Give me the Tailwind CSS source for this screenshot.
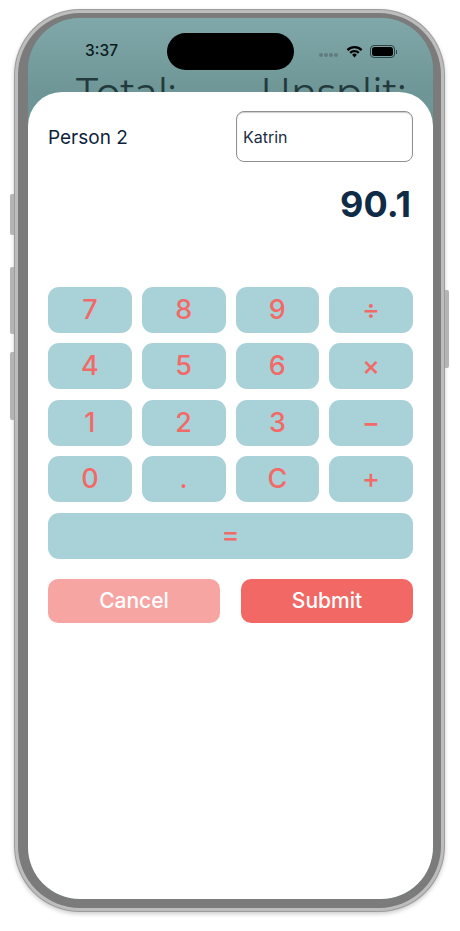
<!DOCTYPE html>
<html lang="en">
<head>
    <meta charset="UTF-8">
    <meta name="viewport" content="width=device-width, initial-scale=1.0">
    <title>Split Calculator</title>
    <script src="https://cdn.jsdelivr.net/npm/@tailwindcss/browser@4"></script>
</head>
<body class="bg-white font-['Inter',sans-serif] w-[460px] h-[931px] overflow-hidden pt-[9px] pl-[14px]">

    <!-- Phone frame -->
    <div class="relative w-[431px] h-[903px] rounded-[66px] bg-[#9c9c9c] p-[1px] shadow-[0_2px_4px_rgba(0,0,0,0.2)]">
        <!-- Side buttons -->
        <div class="absolute left-[-4px] top-[185px] w-[4px] h-[41px] rounded-l-[2px] bg-[#b4b4b4]"></div>
        <div class="absolute left-[-4px] top-[258px] w-[4px] h-[67px] rounded-l-[2px] bg-[#b4b4b4]"></div>
        <div class="absolute left-[-4px] top-[343px] w-[4px] h-[68px] rounded-l-[2px] bg-[#b4b4b4]"></div>
        <div class="absolute right-[-4px] top-[281px] w-[4px] h-[78px] rounded-r-[2px] bg-[#b4b4b4]"></div>

        <div class="w-full h-full rounded-[65px] bg-[#bdbdbd] p-[3px]">
            <div class="w-full h-full rounded-[62px] bg-[#7b7b7b] pt-[5px] pl-[10px] pr-[8px] pb-[9px]">

                <!-- Screen -->
                <div class="w-full h-full rounded-[52px] overflow-hidden bg-[#6f9696] flex flex-col">

                    <!-- Background page peeking above the sheet -->
                    <div class="h-[74px] shrink-0 overflow-hidden bg-gradient-to-b from-[#80a8aa] to-[#6f9696]">
                        <div class="relative h-[52px]">
                            <span class="absolute left-[57px] top-[23px] text-[15.5px] leading-5 font-medium text-[#0b1a1c]">3:37</span>
                            <div class="absolute left-[139px] top-[15px] w-[127px] h-[37px] rounded-[19px] bg-black"></div>
                            <!-- signal dots -->
                            <div class="absolute left-[291px] top-[35px] flex gap-[1px]">
                                <span class="w-[4px] h-[4px] rounded-full bg-[#5f7d7f]"></span>
                                <span class="w-[4px] h-[4px] rounded-full bg-[#5f7d7f]"></span>
                                <span class="w-[4px] h-[4px] rounded-full bg-[#5f7d7f]"></span>
                                <span class="w-[4px] h-[4px] rounded-full bg-[#5f7d7f]"></span>
                            </div>
                            <!-- wifi -->
                            <svg class="absolute left-[318px] top-[27px]" width="17" height="13" viewBox="0 0 17 13">
                                <path d="M0.6 4.2 A11.2 11.2 0 0 1 16.4 4.2 L14.8 5.9 A9 9 0 0 0 2.2 5.9 Z" fill="#000"/>
                                <path d="M3.4 7 A7.2 7.2 0 0 1 13.6 7 L12 8.7 A5 5 0 0 0 5 8.7 Z" fill="#000"/>
                                <path d="M6.1 9.8 A3.4 3.4 0 0 1 10.9 9.8 L8.5 12.4 Z" fill="#000"/>
                            </svg>
                            <!-- battery -->
                            <div class="absolute left-[342px] top-[27px] flex items-center gap-[1px]">
                                <div class="w-[25px] h-[13px] rounded-[4px] border border-[#2c4244] p-[1px]">
                                    <div class="w-full h-full rounded-[2.5px] bg-black"></div>
                                </div>
                                <div class="w-[1px] h-[4px] bg-[#2c4244]"></div>
                            </div>
                        </div>
                        <div class="flex justify-between pl-[48px] pr-[27px] font-['Montserrat','Lato',sans-serif] text-[38.5px] leading-[46px] font-normal text-[#233a3c]">
                            <span>Total:</span>
                            <span>Unsplit:</span>
                        </div>
                    </div>

                    <!-- Sheet -->
                    <div class="flex-1 bg-white rounded-t-[34px] px-5 pt-[19px]">
                        <div class="flex items-center justify-between">
                            <span class="pt-1 text-[19px] text-[#0e1f3d]">Person 2</span>
                            <input type="text" value="Katrin" class="w-[177px] h-[51px] px-[6px] rounded-[8px] border border-[#8f8f8f] bg-white text-[16px] text-[#1a2e45] shadow-[inset_0_1px_1px_rgba(0,0,0,0.2)] outline-none">
                        </div>

                        <div class="mt-[19px] h-[46px] text-right pr-[2px] text-[36px] leading-[46px] font-bold text-[#0f2b46]">90.1</div>

                        <!-- Keypad -->
                        <div class="mt-[60px] grid grid-cols-4 gap-x-[10px] gap-y-[10.4px] text-[27px] font-medium text-[#f26a67]">
                            <button class="h-[46px] rounded-[11px] bg-[#a8d2d8]">7</button>
                            <button class="h-[46px] rounded-[11px] bg-[#a8d2d8]">8</button>
                            <button class="h-[46px] rounded-[11px] bg-[#a8d2d8]">9</button>
                            <button class="h-[46px] rounded-[11px] bg-[#a8d2d8]">÷</button>
                            <button class="h-[46px] rounded-[11px] bg-[#a8d2d8]">4</button>
                            <button class="h-[46px] rounded-[11px] bg-[#a8d2d8]">5</button>
                            <button class="h-[46px] rounded-[11px] bg-[#a8d2d8]">6</button>
                            <button class="h-[46px] rounded-[11px] bg-[#a8d2d8]">×</button>
                            <button class="h-[46px] rounded-[11px] bg-[#a8d2d8]">1</button>
                            <button class="h-[46px] rounded-[11px] bg-[#a8d2d8]">2</button>
                            <button class="h-[46px] rounded-[11px] bg-[#a8d2d8]">3</button>
                            <button class="h-[46px] rounded-[11px] bg-[#a8d2d8]">−</button>
                            <button class="h-[46px] rounded-[11px] bg-[#a8d2d8]">0</button>
                            <button class="h-[46px] rounded-[11px] bg-[#a8d2d8]">.</button>
                            <button class="h-[46px] rounded-[11px] bg-[#a8d2d8]">C</button>
                            <button class="h-[46px] rounded-[11px] bg-[#a8d2d8]">+</button>
                            <button class="col-span-4 h-[46px] rounded-[11px] bg-[#a8d2d8]">=</button>
                        </div>

                        <div class="mt-[20px] flex justify-between">
                            <button class="w-[172px] h-[44px] rounded-[10px] bg-[#f7a5a3] text-white text-[21px] font-medium">Cancel</button>
                            <button class="w-[172px] h-[44px] rounded-[10px] bg-[#f26865] text-white text-[21px] font-medium">Submit</button>
                        </div>
                    </div>
                </div>

            </div>
        </div>
    </div>

</body>
</html>
